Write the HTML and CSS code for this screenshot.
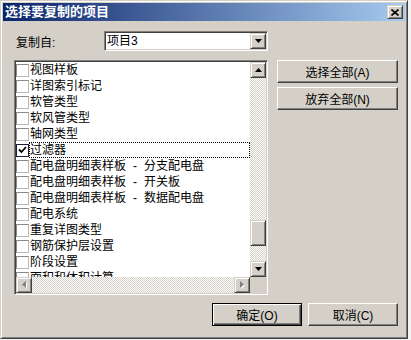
FILE: index.html
```html
<!DOCTYPE html>
<html lang="zh-CN">
<head>
    <meta charset="UTF-8">
    <title>选择要复制的项目</title>
    <link rel="stylesheet" href="styles.css">
</head>
<body>
    <div class="window">
        <div class="titlebar">
            <span class="title">选择要复制的项目</span>
            <span class="close">
                <svg width="8" height="7" viewBox="0 0 8 7"><path d="M0.5 0.5L7.5 6.5M7.5 0.5L0.5 6.5" stroke="#000" stroke-width="1.6" fill="none"/></svg>
            </span>
        </div>

        <div class="content">
            <div class="source-row">
                <span class="label">复制自:</span>
                <div class="combo">
                    <span class="combo-text">项目3</span>
                    <span class="sbtn">
                        <svg width="7" height="4" viewBox="0 0 7 4"><path d="M0 0h7L3.5 4z" fill="#000"/></svg>
                    </span>
                </div>
            </div>

            <div class="main-row">
                <div class="listbox">
                    <div class="items">
                        <div class="item"><span class="check"></span><span class="name">视图样板</span></div>
                        <div class="item"><span class="check"></span><span class="name">详图索引标记</span></div>
                        <div class="item"><span class="check"></span><span class="name">软管类型</span></div>
                        <div class="item"><span class="check"></span><span class="name">软风管类型</span></div>
                        <div class="item"><span class="check"></span><span class="name">轴网类型</span></div>
                        <div class="item focused">
                            <span class="check checked">
                                <svg width="9" height="8" viewBox="0 0 9 8"><polyline points="1,3.5 3.5,6 8,1" stroke="#000" stroke-width="1.8" fill="none"/></svg>
                            </span>
                            <span class="name">过滤器</span>
                        </div>
                        <div class="item"><span class="check"></span><span class="name">配电盘明细表样板<span class="sep">-</span>分支配电盘</span></div>
                        <div class="item"><span class="check"></span><span class="name">配电盘明细表样板<span class="sep">-</span>开关板</span></div>
                        <div class="item"><span class="check"></span><span class="name">配电盘明细表样板<span class="sep">-</span>数据配电盘</span></div>
                        <div class="item"><span class="check"></span><span class="name">配电系统</span></div>
                        <div class="item"><span class="check"></span><span class="name">重复详图类型</span></div>
                        <div class="item"><span class="check"></span><span class="name">钢筋保护层设置</span></div>
                        <div class="item"><span class="check"></span><span class="name">阶段设置</span></div>
                        <div class="item"><span class="check"></span><span class="name">面积和体积计算</span></div>
                    </div>

                    <div class="vscroll">
                        <span class="sbtn">
                            <svg width="7" height="4" viewBox="0 0 7 4"><path d="M3.5 0L7 4H0z" fill="#000"/></svg>
                        </span>
                        <span class="track track-top"></span>
                        <span class="thumb"></span>
                        <span class="track track-rest"></span>
                        <span class="sbtn">
                            <svg width="7" height="4" viewBox="0 0 7 4"><path d="M0 0h7L3.5 4z" fill="#000"/></svg>
                        </span>
                    </div>

                    <div class="hscroll">
                        <span class="sbtn">
                            <svg width="5" height="8" viewBox="0 0 5 8"><path d="M5 1v7L1 4.5z" fill="#fff"/><path d="M4 0v7L0 3.5z" fill="#808080"/></svg>
                        </span>
                        <span class="track track-wide"></span>
                        <span class="sbtn">
                            <svg width="5" height="8" viewBox="0 0 5 8"><path d="M1 1v7L5 4.5z" fill="#fff"/><path d="M0 0v7L4 3.5z" fill="#808080"/></svg>
                        </span>
                    </div>

                    <div class="corner"></div>
                </div>

                <div class="side-buttons">
                    <button class="btn wide">选择全部(A)</button>
                    <button class="btn wide">放弃全部(N)</button>
                </div>
            </div>

            <div class="bottom-row">
                <button class="btn default">确定(O)</button>
                <button class="btn">取消(C)</button>
            </div>
        </div>
    </div>
</body>
</html>
```

FILE: styles.css
```css
body {
    margin: 0;
    background-color: #f4f4f4;
    font-family: "Liberation Sans", "Noto Sans CJK SC", sans-serif;
    font-size: 12px;
    color: #000;
}

.window {
    width: 408px;
    height: 339px;
    box-sizing: border-box;
    background-color: #d4d0c8;
    border: 1px solid;
    border-color: #d4d0c8 #404040 #404040 #d4d0c8;
    box-shadow: inset 1px 1px #fff, inset -1px -1px #808080;
    padding: 2px;
}

.titlebar {
    height: 18px;
    display: flex;
    align-items: center;
    justify-content: space-between;
    padding: 0 2px;
    background: linear-gradient(to right, #0a246a, #a6caf0);
}

.title {
    color: #fff;
    font-weight: bold;
    font-size: 13px;
    line-height: 18px;
}

.close,
.sbtn,
.thumb {
    box-sizing: border-box;
    background-color: #d4d0c8;
    border: 1px solid;
    border-color: #d4d0c8 #404040 #404040 #d4d0c8;
    box-shadow: inset 1px 1px #fff, inset -1px -1px #808080;
}

.close {
    width: 16px;
    height: 14px;
    display: flex;
    align-items: center;
    justify-content: center;
}

.close svg {
    display: block;
}

.content {
    padding: 10px 7px 0 11px;
}

.source-row {
    display: flex;
    align-items: center;
    height: 20px;
    margin-bottom: 9px;
}

.label {
    width: 88px;
    padding-left: 2px;
}

.combo,
.listbox {
    box-sizing: border-box;
    background-color: #fff;
    border: 1px solid;
    border-color: #808080 #fff #fff #808080;
    box-shadow: inset 1px 1px #404040, inset -1px -1px #d4d0c8;
    padding: 1px;
}

.combo {
    width: 164px;
    height: 20px;
    display: flex;
}

.combo-text {
    flex: 1;
    padding-left: 1px;
    line-height: 16px;
}

.sbtn {
    width: 16px;
    height: 16px;
    display: flex;
    align-items: center;
    justify-content: center;
    flex-shrink: 0;
}

.sbtn svg {
    display: block;
}

.main-row {
    display: flex;
    align-items: flex-start;
    gap: 9px;
}

.listbox {
    width: 254px;
    height: 235px;
    display: grid;
    grid-template-columns: 234px 16px;
    grid-template-rows: 215px 16px;
}

.items {
    overflow: hidden;
}

.item {
    height: 16px;
    display: flex;
    align-items: center;
}

.check {
    width: 13px;
    height: 13px;
    box-sizing: border-box;
    border: 1px solid;
    border-color: #8a8a8a #b8b8b8 #b8b8b8 #8a8a8a;
    background-color: #fff;
    flex-shrink: 0;
    display: flex;
    align-items: center;
    justify-content: center;
}

.check.checked {
    border-color: #1c1c3a;
}

.check svg {
    display: block;
}

.name {
    flex: 1;
    height: 16px;
    box-sizing: border-box;
    padding-left: 1px;
    line-height: 16px;
    white-space: nowrap;
}

.focused .name {
    outline: 1px dotted #000;
    outline-offset: -1px;
}

.sep {
    display: inline-block;
    width: 18px;
    text-align: center;
}

.vscroll {
    display: flex;
    flex-direction: column;
}

.hscroll {
    display: flex;
}

.track {
    background-color: #fff;
    background-image: repeating-conic-gradient(#d4d0c8 0 25%, #fff 0 50%);
    background-size: 2px 2px;
}

.track-top {
    height: 142px;
}

.thumb {
    height: 26px;
}

.track-rest,
.track-wide {
    flex: 1;
}

.corner {
    background-color: #d4d0c8;
}

.side-buttons {
    display: flex;
    flex-direction: column;
    gap: 4px;
}

.btn {
    width: 90px;
    height: 23px;
    box-sizing: border-box;
    padding: 0;
    font: inherit;
    color: #000;
    background-color: #d4d0c8;
    border: 1px solid;
    border-color: #fff #404040 #404040 #fff;
    box-shadow: inset -1px -1px #808080;
}

.btn.wide {
    width: 121px;
}

.btn.default {
    border-color: #000;
    box-shadow: inset 1px 1px #fff, inset -1px -1px #404040, inset -2px -2px #808080;
}

.bottom-row {
    display: flex;
    justify-content: flex-end;
    gap: 6px;
    margin-top: 8px;
}
```
